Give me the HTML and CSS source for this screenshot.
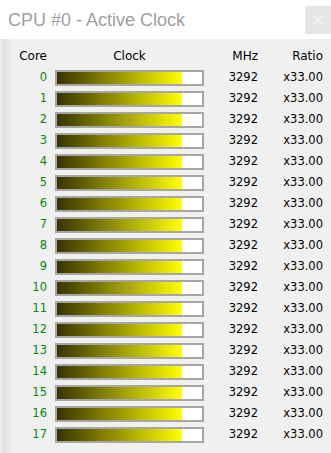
FILE: index.html
```html
<!DOCTYPE html>
<html>
<head>
<meta charset="utf-8">
<link rel="stylesheet" href="styles.css">
</head>
<body>
<div class="window">
  <div class="titlebar">
    <span class="title">CPU #0 - Active Clock</span>
    <span class="close">×</span>
  </div>
  <div class="content">
    <div class="grid">
      <div class="hd hd-core">Core</div>
      <div class="hd hd-clock">Clock</div>
      <div class="hd hd-mhz">MHz</div>
      <div class="hd hd-ratio">Ratio</div>

      <div class="core">0</div><div class="clock"><div class="bar"><div class="fill" style="width:86%"></div></div></div><div class="mhz">3292</div><div class="ratio">x33.00</div>
      <div class="core">1</div><div class="clock"><div class="bar"><div class="fill" style="width:86%"></div></div></div><div class="mhz">3292</div><div class="ratio">x33.00</div>
      <div class="core">2</div><div class="clock"><div class="bar"><div class="fill" style="width:86%"></div></div></div><div class="mhz">3292</div><div class="ratio">x33.00</div>
      <div class="core">3</div><div class="clock"><div class="bar"><div class="fill" style="width:86%"></div></div></div><div class="mhz">3292</div><div class="ratio">x33.00</div>
      <div class="core">4</div><div class="clock"><div class="bar"><div class="fill" style="width:86%"></div></div></div><div class="mhz">3292</div><div class="ratio">x33.00</div>
      <div class="core">5</div><div class="clock"><div class="bar"><div class="fill" style="width:86%"></div></div></div><div class="mhz">3292</div><div class="ratio">x33.00</div>
      <div class="core">6</div><div class="clock"><div class="bar"><div class="fill" style="width:86%"></div></div></div><div class="mhz">3292</div><div class="ratio">x33.00</div>
      <div class="core">7</div><div class="clock"><div class="bar"><div class="fill" style="width:86%"></div></div></div><div class="mhz">3292</div><div class="ratio">x33.00</div>
      <div class="core">8</div><div class="clock"><div class="bar"><div class="fill" style="width:86%"></div></div></div><div class="mhz">3292</div><div class="ratio">x33.00</div>
      <div class="core">9</div><div class="clock"><div class="bar"><div class="fill" style="width:86%"></div></div></div><div class="mhz">3292</div><div class="ratio">x33.00</div>
      <div class="core">10</div><div class="clock"><div class="bar"><div class="fill" style="width:86%"></div></div></div><div class="mhz">3292</div><div class="ratio">x33.00</div>
      <div class="core">11</div><div class="clock"><div class="bar"><div class="fill" style="width:86%"></div></div></div><div class="mhz">3292</div><div class="ratio">x33.00</div>
      <div class="core">12</div><div class="clock"><div class="bar"><div class="fill" style="width:86%"></div></div></div><div class="mhz">3292</div><div class="ratio">x33.00</div>
      <div class="core">13</div><div class="clock"><div class="bar"><div class="fill" style="width:86%"></div></div></div><div class="mhz">3292</div><div class="ratio">x33.00</div>
      <div class="core">14</div><div class="clock"><div class="bar"><div class="fill" style="width:86%"></div></div></div><div class="mhz">3292</div><div class="ratio">x33.00</div>
      <div class="core">15</div><div class="clock"><div class="bar"><div class="fill" style="width:86%"></div></div></div><div class="mhz">3292</div><div class="ratio">x33.00</div>
      <div class="core">16</div><div class="clock"><div class="bar"><div class="fill" style="width:86%"></div></div></div><div class="mhz">3292</div><div class="ratio">x33.00</div>
      <div class="core">17</div><div class="clock"><div class="bar"><div class="fill" style="width:86%"></div></div></div><div class="mhz">3292</div><div class="ratio">x33.00</div>
    </div>
  </div>
</div>
</body>
</html>
```

FILE: styles.css
```css
html, body {
  margin: 0;
  padding: 0;
  background: #f0f0f0;
}
.window {
  width: 331px;
  height: 453px;
  overflow: hidden;
  display: flex;
  flex-direction: column;
}
.titlebar {
  height: 39px;
  background: #ffffff;
  display: flex;
  align-items: center;
  justify-content: space-between;
  flex: none;
}
.title {
  font-family: "Liberation Sans", Arial, sans-serif;
  font-size: 18px;
  color: #a0a0a0;
  padding-left: 8px;
  margin-top: 1px;
}
.close {
  width: 26px;
  height: 28px;
  background: #e6e6e6;
  color: #f4f4f4;
  font-family: "DejaVu Sans", sans-serif;
  font-size: 16px;
  display: flex;
  align-items: center;
  justify-content: center;
}
.content {
  flex: 1;
  padding-top: 7px;
  background: linear-gradient(to right, #ececec 0px, #e0e0e0 4px, #f0f0f0 13px);
}
.grid {
  display: grid;
  grid-template-columns: 47px 157px 54px 65px;
  grid-auto-rows: 21px;
  font-family: "DejaVu Sans", Verdana, sans-serif;
  font-size: 11.5px;
  line-height: 21px;
  color: #000000;
}
.hd {
  font-size: 12px;
}
.hd-core { text-align: right; }
.hd-clock { text-align: center; padding-left: 8px; }
.hd-mhz { text-align: right; }
.hd-ratio { text-align: right; }
.core {
  text-align: right;
  color: #078a07;
}
.clock {
  padding-left: 8px;
  display: flex;
  align-items: center;
}
.bar {
  width: 149px;
  height: 16px;
  box-sizing: border-box;
  border: 2px solid #a6a6a6;
  background: #ffffff;
}
.fill {
  height: 100%;
  background: linear-gradient(to right, #383400, #ffff00);
}
.mhz { text-align: right; }
.ratio { text-align: right; }
```
